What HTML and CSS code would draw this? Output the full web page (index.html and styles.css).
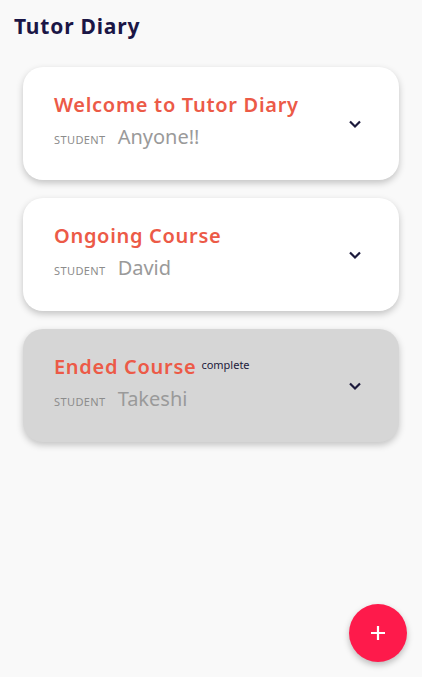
FILE: index.html
```html
<!DOCTYPE html>
<html>
<head>
<meta charset="utf-8">
<link rel="stylesheet" href="styles.css">
</head>
<body>
<header class="appbar">Tutor Diary</header>
<main class="list">
  <section class="card">
    <div class="card-body">
      <div class="title-row"><span class="title">Welcome to Tutor Diary</span></div>
      <div class="student-row"><span class="label">STUDENT</span><span class="name">Anyone!!</span></div>
    </div>
    <svg class="chev" width="14" height="10" viewBox="0 0 14 10"><path d="M2 2.5 L7 7.5 L12 2.5" fill="none" stroke="#1c1a3c" stroke-width="2.2"/></svg>
  </section>
  <section class="card">
    <div class="card-body">
      <div class="title-row"><span class="title">Ongoing Course</span></div>
      <div class="student-row"><span class="label">STUDENT</span><span class="name">David</span></div>
    </div>
    <svg class="chev" width="14" height="10" viewBox="0 0 14 10"><path d="M2 2.5 L7 7.5 L12 2.5" fill="none" stroke="#1c1a3c" stroke-width="2.2"/></svg>
  </section>
  <section class="card ended">
    <div class="card-body">
      <div class="title-row"><span class="title">Ended Course</span><span class="tag">complete</span></div>
      <div class="student-row"><span class="label">STUDENT</span><span class="name">Takeshi</span></div>
    </div>
    <svg class="chev" width="14" height="10" viewBox="0 0 14 10"><path d="M2 2.5 L7 7.5 L12 2.5" fill="none" stroke="#1c1a3c" stroke-width="2.2"/></svg>
  </section>
</main>
<button class="fab" aria-label="add">
  <svg width="16" height="16" viewBox="0 0 16 16"><path d="M8 1 V15 M1 8 H15" stroke="#fff" stroke-width="2.2"/></svg>
</button>
</body>
</html>
```
FILE: styles.css
```css
html, body {
  margin: 0;
  padding: 0;
  background: #f9f9f9;
  font-family: "Noto Sans", "Open Sans", sans-serif;
  height: 100%;
}
.appbar {
  padding: 12px 0 0 14px;
  height: 34px;
  font-size: 21px;
  font-weight: 700;
  color: #1b1646;
  letter-spacing: 0.8px;
}
.list {
  display: flex;
  flex-direction: column;
  gap: 18px;
  padding: 21px 23px 0 23px;
}
.card {
  height: 113px;
  box-sizing: border-box;
  background: #fff;
  border-radius: 20px;
  box-shadow: 0 3px 7px rgba(0,0,0,0.22);
  display: flex;
  align-items: center;
  padding: 0 37px 0 31px;
}
.card.ended {
  background: #d6d6d6;
}
.card-body {
  flex: 1;
  display: flex;
  flex-direction: column;
  gap: 2px;
  margin-top: -4px;
}
.title-row {
  display: flex;
  align-items: baseline;
  gap: 5px;
  height: 30px;
}
.title {
  font-size: 20px;
  font-weight: 600;
  color: #ec5a47;
  letter-spacing: 0.7px;
}
.tag {
  font-size: 11px;
  color: #1c1a3c;
  position: relative;
  top: -5px;
}
.student-row {
  display: flex;
  align-items: baseline;
  gap: 12px;
  height: 30px;
}
.label {
  font-size: 11px;
  color: #8c8c8c;
  letter-spacing: 0.4px;
}
.name {
  font-size: 20px;
  color: #9a9a9a;
}
.chev {
  display: block;
}
.fab {
  position: fixed;
  left: 349px;
  top: 604px;
  width: 58px;
  height: 58px;
  border-radius: 50%;
  border: none;
  background: #fe1a4b;
  box-shadow: 0 3px 6px rgba(0,0,0,0.25);
  display: flex;
  align-items: center;
  justify-content: center;
  padding: 0;
}
```
